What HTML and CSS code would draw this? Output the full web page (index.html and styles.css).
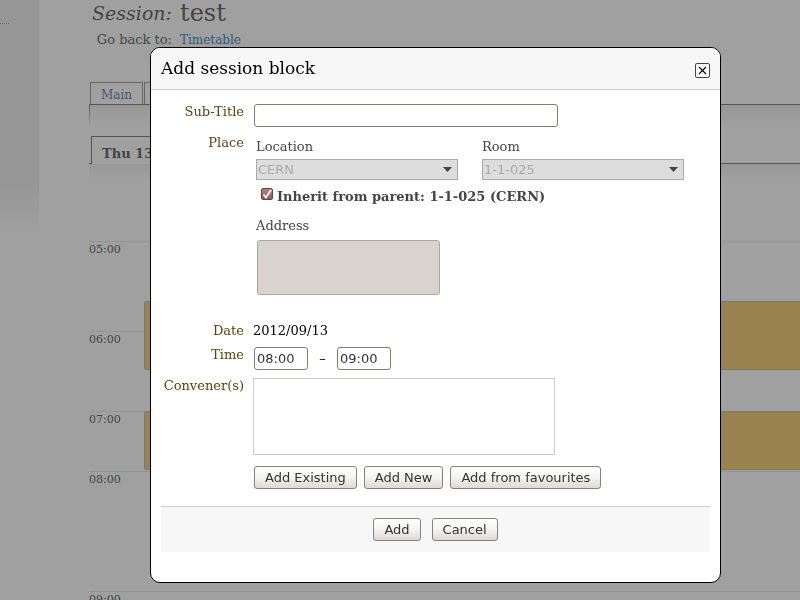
FILE: index.html
```html
<!DOCTYPE html>
<html lang="en">
<head>
<meta charset="utf-8">
<title>Session: test</title>
<link rel="stylesheet" href="styles.css">
</head>
<body>
<div class="page">
  <aside class="sidebar"><div class="sidebar-divider"></div></aside>
  <main class="main">
    <header class="session-head">
      <span class="session-label">Session:</span>
      <h1 class="session-name">test</h1>
      <span class="back-label">Go back to:</span>
      <a class="back-link" href="#">Timetable</a>
    </header>
    <nav class="tabs">
      <a class="tab" href="#">Main</a>
      <a class="tab" href="#"></a>
    </nav>
    <div class="tab-body"></div>
    <div class="day-tabs">
      <div class="day-start"></div>
      <a class="day-tab" href="#">Thu 13/09</a>
      <div class="day-rest"></div>
    </div>
    <div class="day-shadow"></div>
    <section class="timetable">
      <div class="hour hour-5">05:00</div>
      <div class="hour hour-6">06:00</div>
      <div class="hour hour-7">07:00</div>
      <div class="hour hour-8">08:00</div>
      <div class="hour hour-9">09:00</div>
      <div class="event event-first"></div>
      <div class="event event-second"></div>
    </section>
  </main>
</div>

<div class="overlay">
  <form class="dialog" role="dialog" aria-labelledby="dialog-title">
    <header class="dialog-head">
      <h2 class="dialog-title" id="dialog-title">Add session block</h2>
      <button class="close" type="button" aria-label="Close">
        <svg width="15" height="15" viewBox="0 0 15 15"><rect x="0.5" y="0.5" width="14" height="14" rx="1.5" fill="#fff" stroke="#444"/><path d="M4 4l7 7M11 4l-7 7" stroke="#000" stroke-width="1.1" fill="none"/></svg>
      </button>
    </header>
    <div class="fields">
      <label class="caption" for="subtitle">Sub-Title</label>
      <div class="value"><input class="text subtitle" id="subtitle" type="text"></div>

      <span class="caption">Place</span>
      <div class="place">
        <div class="place-selects">
          <div class="place-col">
            <label for="location">Location</label>
            <div class="select-wrap">
              <select id="location" disabled><option>CERN</option></select>
              <svg class="arrow" width="9" height="5" viewBox="0 0 9 5"><path d="M0 0h9L4.500 5z" fill="#444"/></svg>
            </div>
          </div>
          <div class="place-col">
            <label for="room">Room</label>
            <div class="select-wrap">
              <select id="room" disabled><option>1-1-025</option></select>
              <svg class="arrow" width="9" height="5" viewBox="0 0 9 5"><path d="M0 0h9L4.500 5z" fill="#444"/></svg>
            </div>
          </div>
        </div>
        <div class="inherit">
          <span class="check-wrap">
            <input class="check" id="inherit" type="checkbox" checked>
            <svg class="check-mark" width="12" height="12" viewBox="0 0 12 12"><path d="M2.500 6.500L5 9.500L10 2" fill="none" stroke="#fff" stroke-width="1.7"/></svg>
          </span>
          <label class="inherit-label" for="inherit">Inherit from parent: 1-1-025 (CERN)</label>
        </div>
        <label class="address-label" for="address">Address</label>
        <textarea class="address" id="address" disabled></textarea>
      </div>

      <span class="caption">Date</span>
      <div class="date">2012/09/13</div>

      <label class="caption" for="start">Time</label>
      <div class="value time">
        <input class="text clock" id="start" type="text" value="08:00">
        <span class="dash">–</span>
        <input class="text clock" type="text" value="09:00" aria-label="End time">
      </div>

      <span class="caption">Convener(s)</span>
      <div class="conveners">
        <div class="convener-list"></div>
        <div class="convener-actions">
          <button class="button" type="button">Add Existing</button>
          <button class="button" type="button">Add New</button>
          <button class="button" type="button">Add from favourites</button>
        </div>
      </div>
    </div>
    <footer class="dialog-foot">
      <button class="button" type="submit">Add</button>
      <button class="button" type="button">Cancel</button>
    </footer>
  </form>
</div>
</body>
</html>
```
FILE: styles.css
```css
* { box-sizing: border-box; }

html { background: #a0a0a0; }

body {
  margin: 0;
  height: 100vh;
  overflow: hidden;
  font: 13px/16px "DejaVu Serif", serif;
  color: #444;
}

a { text-decoration: none; }

/* Page behind the dialog */
.page { display: flex; }

.sidebar {
  flex: 0 0 39px;
  height: 232px;
  padding-top: 23px;
  background: linear-gradient(#969696 80%, #a0a0a0);
}

.sidebar-divider { width: 9px; border-top: 1px dotted #666; }

.main { flex: 1; margin-left: 50px; }

.session-head {
  display: grid;
  grid-template-columns: 83px 1fr;
  grid-template-rows: 26px 16px;
  column-gap: 8px;
  row-gap: 6px;
  align-items: center;
  height: 82px;
}

.session-label { font-size: 19px; line-height: 26px; font-style: italic; text-align: right; }
.session-name { margin: 0; font-size: 24px; font-weight: normal; line-height: 26px; }
.back-label { text-align: right; }
.back-link { font-size: 12px; color: #265b7d; }

.tabs {
  display: flex;
  gap: 1px;
  padding-left: 1px;
  border-bottom: 1px solid #555;
}

.tab {
  min-width: 53px;
  height: 22px;
  padding: 4px 10px 0;
  border: 1px solid #666;
  border-bottom: 0;
  font-size: 12px;
  color: #45566a;
}

.tab-body {
  height: 31px;
  border-left: 1px solid;
  border-image: linear-gradient(#555, #a0a0a0 21px) 1;
  background: linear-gradient(#979797, #a0a0a0 20px);
}

.day-tabs { display: flex; }
.day-start { width: 2px; border-bottom: 1px solid #555; }

.day-tab {
  height: 28px;
  padding: 9px 10px 0;
  border: 1px solid #555;
  border-bottom: 0;
  font-weight: bold;
  color: #444;
}

.day-rest { flex: 1; border-bottom: 1px solid #555; }
.day-shadow { height: 77px; background: linear-gradient(#989898, #a0a0a0 16px); }

.timetable {
  display: grid;
  grid-template-columns: 55px 1fr;
  grid-auto-rows: 10px;
}

.hour {
  grid-column: 1 / 3;
  border-top: 1px solid #939393;
  font-size: 11px;
}

.hour-5 { grid-row: 1 / 3; }
.hour-6 { grid-row: 10 / 12; }
.hour-7 { grid-row: 18 / 20; }
.hour-8 { grid-row: 24 / 26; }
.hour-9 { grid-row: 36 / 38; }

.event {
  grid-column: 2;
  margin-bottom: 1px;
  background: #9a8251;
  border: 1px solid #777;
  border-right: 0;
  border-radius: 3px 0 0 3px;
}

.event-first { grid-row: 7 / 14; }
.event-second { grid-row: 18 / 24; }

/* Dialog */
.overlay {
  position: fixed;
  inset: 0;
  padding: 47px 79px 0 150px;
}

.dialog {
  padding-bottom: 30px;
  background: #fff;
  border: 1px solid #000;
  border-radius: 10px;
  overflow: hidden;
}

.dialog-head {
  display: flex;
  justify-content: space-between;
  align-items: flex-start;
  height: 42px;
  padding: 10px 10px 0;
  background: #f7f7f7;
  border-bottom: 1px solid #ccc;
}

.dialog-title { margin: 0; font-size: 17px; font-weight: normal; line-height: 20px; color: #000; }

.close {
  display: flex;
  margin-top: 5px;
  padding: 0;
  border: 0;
  background: none;
}

.fields {
  display: grid;
  grid-template-columns: 83px 1fr;
  column-gap: 9px;
  row-gap: 8px;
  padding: 14px 10px 0;
}

.caption { text-align: right; white-space: nowrap; color: #5b4310; }

.value { padding-left: 1px; }

.text {
  display: block;
  height: 23px;
  padding: 0 2px;
  border: 1px solid #857c6f;
  border-radius: 3px;
  background: #fff;
  font: 13px "DejaVu Sans", sans-serif;
  color: #333;
}

.subtitle { width: 304px; }

.place { height: 180px; padding: 4px 0 0 3px; }
.place-selects { display: flex; gap: 24px; }
.place-col { display: flex; flex-direction: column; gap: 4px; width: 202px; }

.select-wrap { display: grid; align-items: center; }

.select-wrap select {
  grid-area: 1 / 1;
  appearance: none;
  height: 21px;
  padding: 0 1px;
  border: 1px solid #aaa;
  border-radius: 0;
  background: #ddd;
  font: 13px "DejaVu Sans", sans-serif;
  color: #aaa;
  opacity: 1;
}

.arrow { grid-area: 1 / 1; justify-self: end; margin-right: 6px; pointer-events: none; }

.inherit {
  display: flex;
  gap: 4px;
  margin-top: 8px;
  padding-left: 5px;
  font-weight: bold;
}

.inherit-label { padding-top: 1px; }

.check-wrap { display: grid; align-self: start; }

.check {
  grid-area: 1 / 1;
  appearance: none;
  width: 12px;
  height: 12px;
  margin: 0;
  border: 1px solid #5e453d;
  border-radius: 2px;
  background: linear-gradient(#b38373, #8a5e52);
}

.check-mark { grid-area: 1 / 1; pointer-events: none; }

.address-label { display: block; margin-top: 13px; }

.address {
  display: block;
  width: 183px;
  height: 55px;
  margin: 6px 0 0 1px;
  border: 1px solid #b0a89c;
  border-radius: 3px;
  background: #d8d3cc;
  resize: none;
}

.date { color: #000; }

.time { display: flex; align-items: center; }
.clock { width: 54px; }
.dash { width: 29px; text-align: center; color: #000; }

.convener-list {
  width: 302px;
  height: 77px;
  border: 1px solid #ccc;
}

.convener-actions { display: flex; gap: 7px; padding: 11px 0 0 1px; }

.button {
  height: 23px;
  padding: 0 10px;
  border: 1px solid #84827e;
  border-radius: 3px;
  background: linear-gradient(#fff, #f4f3f1 50%, #dedad4);
  font: 13px "DejaVu Sans", sans-serif;
  color: #333;
}

.dialog-foot {
  display: flex;
  justify-content: center;
  gap: 11px;
  margin: 17px 10px 0;
  padding: 11px 0;
  border-top: 1px solid #ccc;
  background: #f7f7f7;
}
```
